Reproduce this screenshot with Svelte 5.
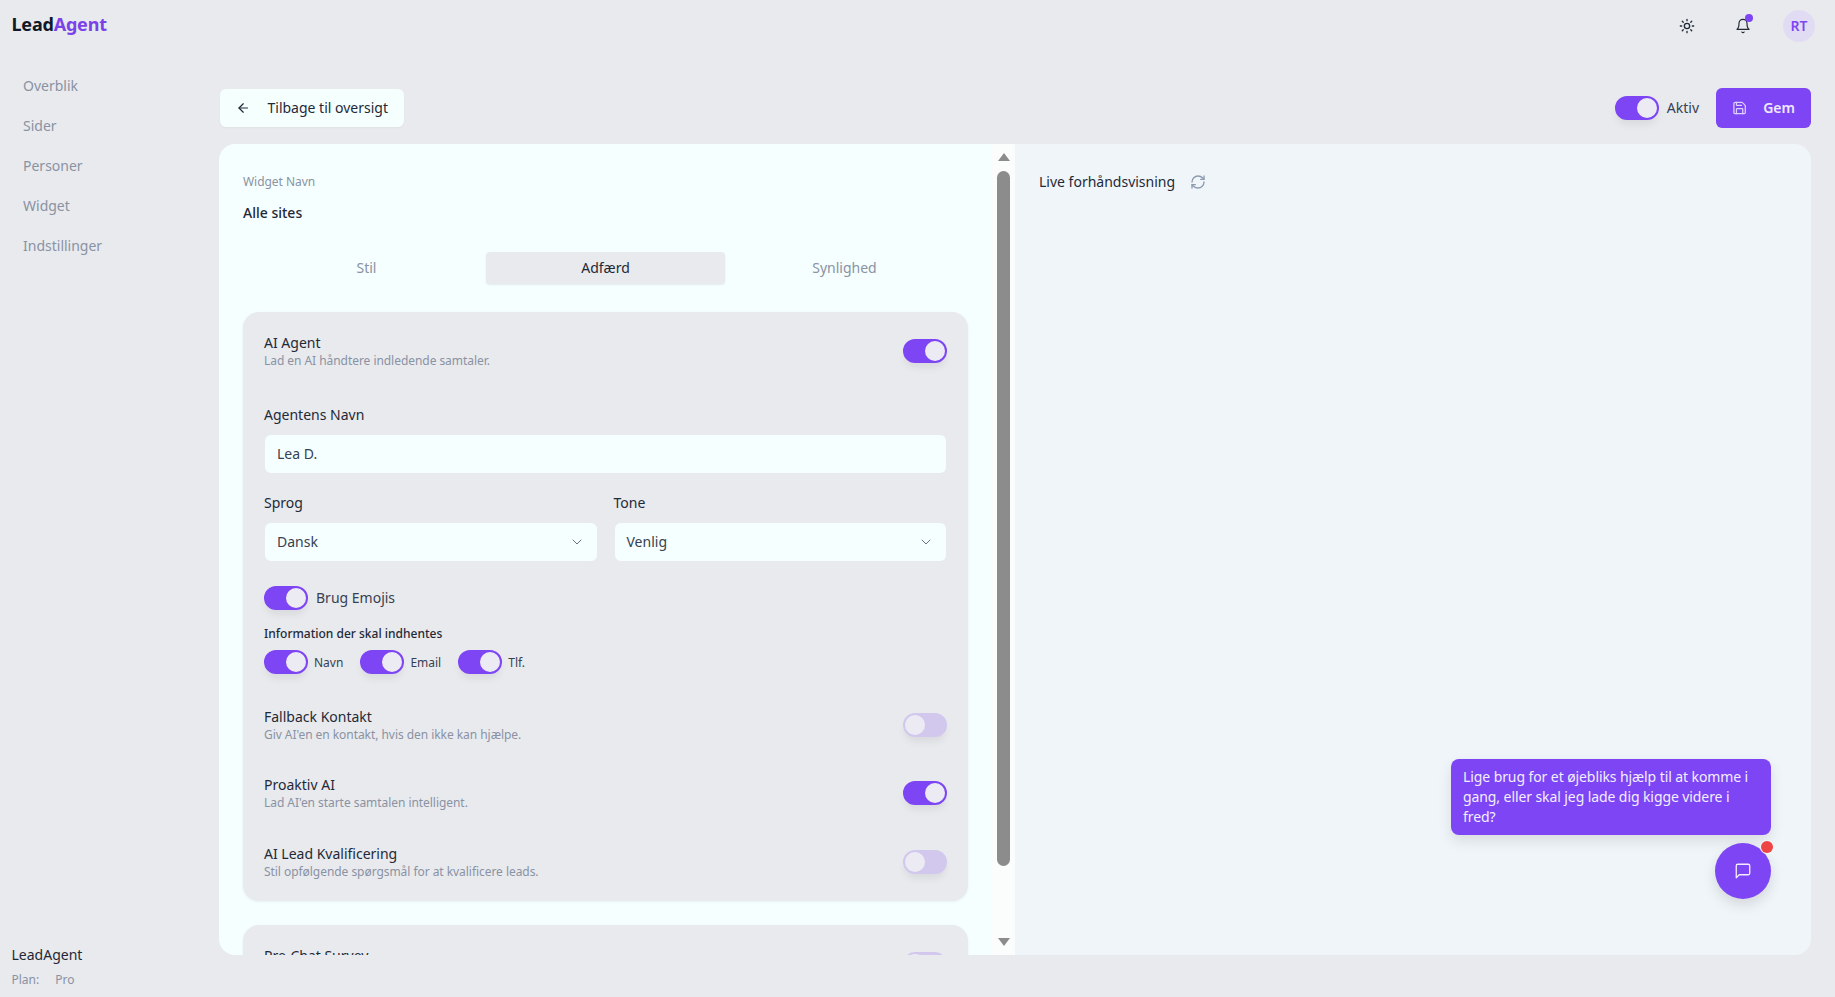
<script>
  const nav = ['Overblik', 'Sider', 'Personer', 'Widget', 'Indstillinger'];
  const tabs = ['Stil', 'Adfærd', 'Synlighed'];
  const collect = ['Navn', 'Email', 'Tlf.'];
</script>

{#snippet toggle(on)}
  <span class="toggle" class:on></span>
{/snippet}

{#snippet chevron()}
  <svg class="chev" width="16" height="16" viewBox="0 0 24 24" fill="none" stroke="currentColor" stroke-width="1.5" stroke-linecap="round" stroke-linejoin="round"><path d="m6 9 6 6 6-6"/></svg>
{/snippet}

<div class="page">
  <header class="topbar">
    <div class="logo">Lead<span>Agent</span></div>
    <div class="top-actions">
      <svg class="sun" width="16" height="16" viewBox="0 0 24 24" fill="none" stroke="currentColor" stroke-width="2" stroke-linecap="round" stroke-linejoin="round"><circle cx="12" cy="12" r="4"/><path d="M12 2v2M12 20v2M4.93 4.93l1.41 1.41M17.66 17.66l1.41 1.41M2 12h2M20 12h2M6.34 17.66l-1.41 1.41M19.07 4.93l-1.41 1.41"/></svg>
      <span class="bell">
        <svg width="16" height="16" viewBox="0 0 24 24" fill="none" stroke="currentColor" stroke-width="1.75" stroke-linecap="round" stroke-linejoin="round"><path d="M10.3 21a1.94 1.94 0 0 0 3.4 0"/><path d="M6 8a6 6 0 0 1 12 0c0 7 3 9 3 9H3s3-2 3-9"/></svg>
        <i></i>
      </span>
      <span class="avatar">RT</span>
    </div>
  </header>

  <div class="body">
    <aside class="sidebar">
      <nav>
        {#each nav as item}<a href="#top">{item}</a>{/each}
      </nav>
      <div class="plan">
        <div class="plan-name">LeadAgent</div>
        <div class="plan-row"><span>Plan:</span><span>Pro</span></div>
      </div>
    </aside>

    <main class="main">
      <div class="actions">
        <button class="back">
          <svg width="16" height="16" viewBox="0 0 24 24" fill="none" stroke="currentColor" stroke-width="2" stroke-linecap="round" stroke-linejoin="round"><path d="m12 19-7-7 7-7"/><path d="M19 12H5"/></svg>
          <span class="btn-text">Tilbage til oversigt</span>
        </button>
        <div class="actions-right">
          <label class="aktiv">{@render toggle(true)}<span>Aktiv</span></label>
          <button class="save">
            <svg width="16" height="16" viewBox="0 0 24 24" fill="none" stroke="currentColor" stroke-width="2" stroke-linecap="round" stroke-linejoin="round"><path d="M15.2 3a2 2 0 0 1 1.4.6l3.8 3.8a2 2 0 0 1 .6 1.4V19a2 2 0 0 1-2 2H5a2 2 0 0 1-2-2V5a2 2 0 0 1 2-2z"/><path d="M17 21v-7a1 1 0 0 0-1-1H8a1 1 0 0 0-1 1v7"/><path d="M7 3v4a1 1 0 0 0 1 1h7"/></svg>
            <span class="btn-text">Gem</span>
          </button>
        </div>
      </div>

      <div class="workspace">
        <section class="editor">
          <div class="scroll">
            <div class="name-label">Widget Navn</div>
            <div class="name-value">Alle sites</div>
            <div class="tabs">
              {#each tabs as t}<div class="tab" class:active={t === 'Adfærd'}>{t}</div>{/each}
            </div>

            <div class="group">
              <div class="row">
                <div><div class="title">AI Agent</div><div class="desc">Lad en AI håndtere indledende samtaler.</div></div>
                {@render toggle(true)}
              </div>

              <div class="field-label agent-label">Agentens Navn</div>
              <div class="input"><span>Lea D.</span></div>

              <div class="two">
                <div>
                  <div class="field-label">Sprog</div>
                  <div class="input select"><span>Dansk</span>{@render chevron()}</div>
                </div>
                <div>
                  <div class="field-label">Tone</div>
                  <div class="input select"><span>Venlig</span>{@render chevron()}</div>
                </div>
              </div>

              <label class="emoji">{@render toggle(true)}<span>Brug Emojis</span></label>

              <div class="collect-label">Information der skal indhentes</div>
              <div class="collect">
                {#each collect as c}
                  <label>{@render toggle(true)}<span>{c}</span></label>
                {/each}
              </div>

              <div class="row fallback">
                <div><div class="title">Fallback Kontakt</div><div class="desc">Giv AI'en en kontakt, hvis den ikke kan hjælpe.</div></div>
                {@render toggle(false)}
              </div>
              <div class="row proactive">
                <div><div class="title">Proaktiv AI</div><div class="desc">Lad AI'en starte samtalen intelligent.</div></div>
                {@render toggle(true)}
              </div>
              <div class="row qualify">
                <div><div class="title">AI Lead Kvalificering</div><div class="desc">Stil opfølgende spørgsmål for at kvalificere leads.</div></div>
                {@render toggle(false)}
              </div>
            </div>

            <div class="group survey">
              <div class="row survey-row">
                <div class="title">Pre-Chat Survey</div>
                {@render toggle(false)}
              </div>
            </div>
          </div>

          <div class="scrollbar">
            <span class="arrow up"></span>
            <span class="thumb"></span>
            <span class="arrow down"></span>
          </div>
        </section>

        <section class="preview">
          <div class="preview-head">
            <span>Live forhåndsvisning</span>
            <svg width="16" height="16" viewBox="0 0 24 24" fill="none" stroke="currentColor" stroke-width="2" stroke-linecap="round" stroke-linejoin="round"><path d="M3 12a9 9 0 0 1 9-9 9.75 9.75 0 0 1 6.74 2.74L21 8"/><path d="M21 3v5h-5"/><path d="M21 12a9 9 0 0 1-9 9 9.75 9.75 0 0 1-6.74-2.74L3 16"/><path d="M8 16H3v5"/></svg>
          </div>
          <div class="chat">
            <div class="bubble">Lige brug for et øjebliks hjælp til at komme i gang, eller skal jeg lade dig kigge videre i fred?</div>
            <div class="fab">
              <svg width="18" height="18" viewBox="0 0 24 24" fill="none" stroke="currentColor" stroke-width="1.75" stroke-linecap="round" stroke-linejoin="round"><path d="M21 15a2 2 0 0 1-2 2H7l-4 4V5a2 2 0 0 1 2-2h14a2 2 0 0 1 2 2z"/></svg>
              <i></i>
            </div>
          </div>
        </section>
      </div>
    </main>
  </div>
</div>

<style>
  :global(body) {
    margin: 0;
    background: #e8eaee;
    font-family: "Noto Sans", "Open Sans", sans-serif;
    color: #1f2937;
    font-size: 14px;
  }
  .page { height: 997px; display: flex; flex-direction: column; overflow: hidden; }
  .topbar { height: 52px; display: flex; align-items: center; justify-content: space-between; padding: 0 20px 0 12px; flex: none; }
  .logo { font-size: 18px; font-weight: 700; color: #111827; line-height: 24px; margin-top: -4px; margin-left: -0.5px; letter-spacing: -0.2px; }
  .logo span { color: #7c42e8; }
  .top-actions { display: flex; align-items: center; }
  .sun { color: #1f2937; margin-right: 40px; }
  .bell { position: relative; display: flex; margin-right: 32px; color: #1f2937; }
  .bell i { position: absolute; top: -4px; right: -2px; width: 8px; height: 8px; border-radius: 50%; background: #7e45f4; }
  .avatar { width: 32px; height: 32px; border-radius: 50%; background: #e1dcf3; color: #7e45f4; font-size: 14px; line-height: 20px; font-weight: 600; display: flex; align-items: center; justify-content: center; }

  .body { flex: 1; display: flex; min-height: 0; }
  .sidebar { width: 219px; flex: none; display: flex; flex-direction: column; padding: 14px 0 9px; box-sizing: border-box; }
  nav { display: flex; flex-direction: column; padding-left: 23px; }
  nav a { height: 40px; line-height: 40px; color: #8a92a3; text-decoration: none; font-size: 14px; }
  .plan { margin-top: auto; padding-left: 11.5px; }
  .plan-name { font-size: 14px; line-height: 20px; color: #1f2937; }
  .plan-row { font-size: 12px; line-height: 16px; margin-top: 7px; color: #8a92a3; display: flex; gap: 16px; }

  .main { flex: 1; display: flex; flex-direction: column; padding: 36px 24px 42px 0; box-sizing: border-box; min-width: 0; }
  .actions { display: flex; justify-content: space-between; align-items: center; height: 40px; margin-bottom: 16px; flex: none; }
  button { font: inherit; border: 0; cursor: pointer; display: flex; align-items: center; white-space: nowrap; }
  .btn-text { line-height: 20px; margin-top: -1px; }
  .back { margin-left: 1px; height: 38px; width: 184px; padding: 0 16px; gap: 17px; background: #f5fffe; color: #1f2937; border-radius: 6px; box-shadow: 0 1px 2px rgba(0,0,0,.04); }
  .actions-right { display: flex; align-items: center; }
  .aktiv { display: flex; align-items: center; gap: 8px; margin-right: 17px; color: #374151; }
  .aktiv span { line-height: 20px; margin-top: -1px; }
  .save { width: 95px; height: 40px; padding: 0 16px; gap: 16px; background: #7e45f4; color: #efe9ff; border-radius: 6px; font-weight: 600; }
  .save svg { opacity: .85; }

  .toggle { display: block; flex: none; position: relative; box-sizing: border-box; width: 44px; height: 24px; border-radius: 12px; background: #d2c8ee; border: 2px solid #d2c8ee; box-shadow: 0 6px 8px -2px rgba(0,0,0,.08); }
  .toggle::after { content: ""; position: absolute; top: 0; left: 0; width: 20px; height: 20px; border-radius: 50%; background: #ecebf4; }
  .toggle.on { background: #7e45f4; border-color: #7e45f4; }
  .toggle.on::after { left: 20px; }

  .workspace { flex: 1; min-height: 0; display: flex; border-radius: 16px; overflow: hidden; }
  .editor { width: 796px; flex: none; background: #f5ffff; display: flex; }
  .scroll { flex: 1; min-width: 0; padding: 24px 24px 0 24px; overflow: hidden; }
  .name-label { font-size: 12px; line-height: 16px; color: #8a92a3; margin-top: 6px; letter-spacing: -0.05px; }
  .name-value { font-size: 14px; line-height: 20px; font-weight: 500; color: #1f2937; margin-top: 13px; }
  .tabs { display: grid; grid-template-columns: repeat(3, 1fr); padding: 4px; margin-top: 25px; }
  .tab { height: 32px; padding-bottom: 1px; box-sizing: border-box; display: flex; align-items: center; justify-content: center; color: #8a92a3; border-radius: 4px; }
  .tab.active { background: #e8eaee; color: #1f2937; box-shadow: 0 1px 2px rgba(0,0,0,.08); }

  .group { margin-top: 24px; background: #e8eaee; border-radius: 16px; padding: 21px; box-shadow: 0 1px 3px rgba(0,0,0,.06); }
  .survey { margin-top: 24px; }
  .row { display: flex; align-items: center; justify-content: space-between; }
  .survey-row { min-height: 36px; }
  .survey-row .title { align-self: flex-start; }
  .title { font-size: 14px; line-height: 20px; color: #1f2937; }
  .desc { font-size: 12px; line-height: 16px; color: #8a92a3; letter-spacing: -0.05px; }
  .field-label { font-size: 14px; line-height: 20px; color: #1f2937; margin-bottom: 9px; }
  .agent-label { margin-top: 36px; }
  .input { height: 40px; border-radius: 7px; border: 1px solid #e8eaee; background: #f5ffff; display: flex; align-items: center; padding: 0 12px; color: #374151; font-size: 14px; line-height: 20px; box-sizing: border-box; }
  .select { justify-content: space-between; }
  .select span { margin-top: -1px; }
  .chev { color: #6b7280; }
  .two { display: grid; grid-template-columns: 1fr 1fr; gap: 16px; margin-top: 19px; }
  .emoji { display: flex; align-items: center; gap: 8px; margin-top: 25px; color: #374151; }
  .emoji span { line-height: 20px; margin-top: -1px; }
  .collect-label { font-size: 12px; line-height: 16px; font-weight: 500; color: #1f2937; margin-top: 16px; }
  .collect { display: flex; gap: 17px; margin-top: 8px; }
  .collect label { display: flex; align-items: center; gap: 6px; font-size: 12px; color: #374151; }
  .fallback { margin-top: 33px; }
  .proactive { margin-top: 32px; }
  .qualify { margin-top: 33px; }

  .scrollbar { width: 23px; flex: none; background: #fbfcfc; display: flex; flex-direction: column; align-items: center; padding: 9px 0; box-sizing: border-box; }
  .arrow { width: 0; height: 0; border-left: 6px solid transparent; border-right: 6px solid transparent; flex: none; }
  .up { border-bottom: 8px solid #8c8c8c; }
  .down { border-top: 8px solid #8c8c8c; margin-top: auto; }
  .thumb { width: 13px; height: 695px; margin-top: 10px; border-radius: 7px; background: #8c8c8c; flex: none; }

  .preview { flex: 1; min-width: 0; background: #f0f5f9; padding: 28px 24px; box-sizing: border-box; display: flex; flex-direction: column; }
  .preview-head { display: flex; align-items: center; gap: 15px; line-height: 20px; color: #1f2937; }
  .preview-head svg { color: #8d9bb0; }
  .chat { margin-top: auto; margin-right: 16px; margin-bottom: 28px; display: flex; flex-direction: column; align-items: flex-end; gap: 8px; }
  .bubble { width: 320px; box-sizing: border-box; padding: 8px 12px; background: #7e45f4; color: #f3eeff; font-size: 14px; line-height: 20px; letter-spacing: -0.09px; border-radius: 8px; box-shadow: 0 6px 14px rgba(0,0,0,.1); }
  .fab { position: relative; width: 56px; height: 56px; border-radius: 50%; background: #7e45f4; color: #f3eeff; display: flex; align-items: center; justify-content: center; box-shadow: 0 6px 14px rgba(0,0,0,.12); }
  .fab i { position: absolute; top: -2px; right: -2px; width: 12px; height: 12px; border-radius: 50%; background: #ef4444; box-shadow: 0 0 0 1px #f0f5f9; }
</style>
